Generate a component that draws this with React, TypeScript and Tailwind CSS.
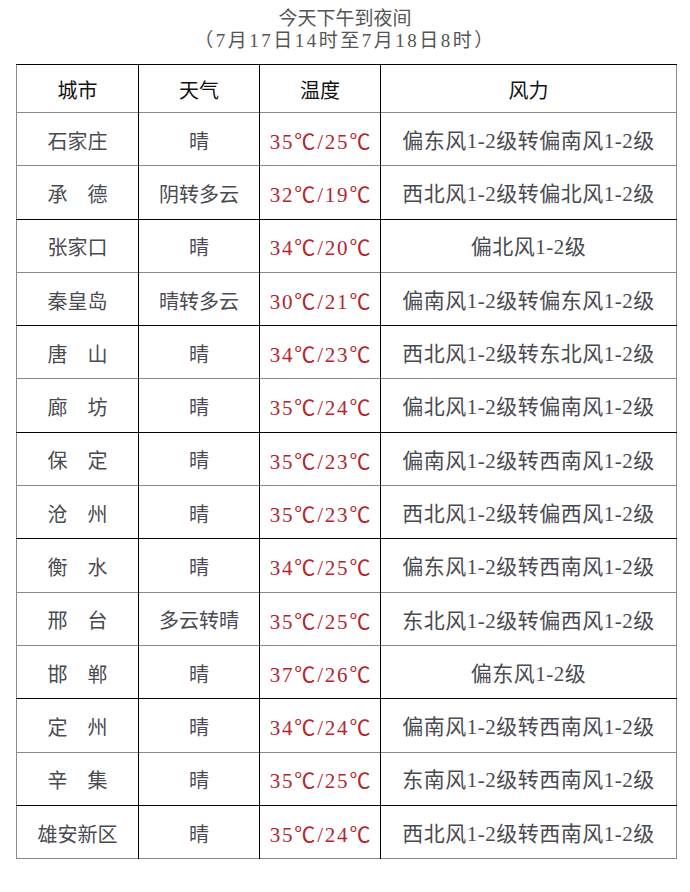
const rows: { city: string; weather: string; temp: string; wind: string; line: "black" | "gray" }[] = [
    { city: "石家庄", weather: "晴", temp: "35℃/25℃", wind: "偏东风1-2级转偏南风1-2级", line: "gray" },
    { city: "承　德", weather: "阴转多云", temp: "32℃/19℃", wind: "西北风1-2级转偏北风1-2级", line: "black" },
    { city: "张家口", weather: "晴", temp: "34℃/20℃", wind: "偏北风1-2级", line: "gray" },
    { city: "秦皇岛", weather: "晴转多云", temp: "30℃/21℃", wind: "偏南风1-2级转偏东风1-2级", line: "black" },
    { city: "唐　山", weather: "晴", temp: "34℃/23℃", wind: "西北风1-2级转东北风1-2级", line: "gray" },
    { city: "廊　坊", weather: "晴", temp: "35℃/24℃", wind: "偏北风1-2级转偏南风1-2级", line: "black" },
    { city: "保　定", weather: "晴", temp: "35℃/23℃", wind: "偏南风1-2级转西南风1-2级", line: "gray" },
    { city: "沧　州", weather: "晴", temp: "35℃/23℃", wind: "西北风1-2级转偏西风1-2级", line: "black" },
    { city: "衡　水", weather: "晴", temp: "34℃/25℃", wind: "偏东风1-2级转西南风1-2级", line: "gray" },
    { city: "邢　台", weather: "多云转晴", temp: "35℃/25℃", wind: "东北风1-2级转偏西风1-2级", line: "gray" },
    { city: "邯　郸", weather: "晴", temp: "37℃/26℃", wind: "偏东风1-2级", line: "black" },
    { city: "定　州", weather: "晴", temp: "34℃/24℃", wind: "偏南风1-2级转西南风1-2级", line: "gray" },
    { city: "辛　集", weather: "晴", temp: "35℃/25℃", wind: "东南风1-2级转西南风1-2级", line: "black" },
    { city: "雄安新区", weather: "晴", temp: "35℃/24℃", wind: "西北风1-2级转西南风1-2级", line: "gray" },
];

// ℃ set in the CJK face so it is full width, as in the source
const Temp = ({ value }: { value: string }) => (
    <>
        {value.split("℃").map((part, i, all) => (
            <span key={i}>
                {part}
                {i < all.length - 1 && <span className="font-['Noto_Sans_CJK_SC']">℃</span>}
            </span>
        ))}
    </>
);

const App = () => {
    return (
        <div className="w-[690px] h-[892px] bg-white text-[#4a4a52]" style={{ fontFamily: '"Liberation Serif", "Noto Sans CJK SC", serif' }}>
            <div className="pt-[8px] text-center text-[19px] leading-[22px] text-[#555]">
                <div>今天下午到夜间</div>
                <div className="tracking-[2.5px]">（7月17日14时至7月18日8时）</div>
            </div>

            <table className="ml-4 mt-[12px] w-[661px] border-collapse table-fixed text-[20px] border-l border-l-[#8a8a8a] border-r border-r-[#8a8a8a]">
                <colgroup>
                    <col className="w-[122px]" />
                    <col className="w-[121px]" />
                    <col className="w-[121px]" />
                    <col />
                </colgroup>
                <thead>
                    <tr className="h-[48px] border-t border-t-black border-b border-b-[#8a8a8a] text-[#111]">
                        <th className="pt-[4px] font-normal border-r border-r-black">城市</th>
                        <th className="pt-[4px] font-normal border-r border-r-black">天气</th>
                        <th className="pt-[4px] font-normal border-r border-r-black">温度</th>
                        <th className="pt-[4px] font-normal">风力</th>
                    </tr>
                </thead>
                <tbody>
                    {rows.map((r) => (
                        <tr key={r.city} className={`h-[53.3px] border-b ${r.line === "black" ? "border-b-black" : "border-b-[#8a8a8a]"}`}>
                            <td className="pt-[5px] text-center border-r border-r-black">{r.city}</td>
                            <td className="pt-[5px] text-center border-r border-r-black">{r.weather}</td>
                            <td className="pt-[5px] pl-[2px] text-center border-r border-r-black text-[21px] tracking-[1.8px] text-[#b3262e] whitespace-nowrap">
                                <Temp value={r.temp} />
                            </td>
                            <td className="pt-[5px] text-center text-[21px] tracking-[0.5px] whitespace-nowrap">{r.wind}</td>
                        </tr>
                    ))}
                </tbody>
            </table>
        </div>
    );
};

export default App;
